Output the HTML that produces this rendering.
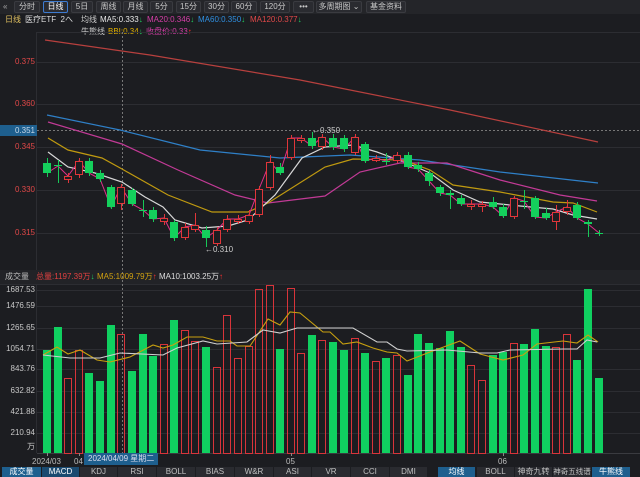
<!DOCTYPE html>
<html><head><meta charset="utf-8"><style>
*{margin:0;padding:0;box-sizing:border-box}
body{width:640px;height:477px;background:#1c1d21;font-family:"Liberation Sans","Noto Sans CJK SC",sans-serif;overflow:hidden;position:relative;color:#c8c8c8}
.tb{position:absolute;left:0;top:0;width:640px;height:14px;background:#242529}
.btn{position:absolute;top:1px;height:12px;border:1px solid #3a3b40;background:#2a2b30;border-radius:2px;font-size:8px;line-height:10px;text-align:center;color:#c8c8c8;white-space:nowrap;overflow:hidden}
.t{position:absolute;font-size:8px;line-height:10px;white-space:nowrap}
.tab{position:absolute;top:467px;height:10px;background:#2a2b30;font-size:8px;line-height:10px;text-align:center;color:#c0c0c0;white-space:nowrap;overflow:hidden}
.ax{position:absolute;font-size:8px;line-height:10px;text-align:right;width:35px;left:0}
</style></head><body>
<div class="tb"></div>
<div class="t" style="left:3px;top:2px;color:#aaa">«</div>
<div class="btn" style="left:14px;width:26px">分时</div>
<div class="btn" style="left:43px;width:25px;border-color:#3d7bd1;color:#fff">日线</div>
<div class="btn" style="left:71px;width:22px">5日</div>
<div class="btn" style="left:96px;width:25px">周线</div>
<div class="btn" style="left:123px;width:25px">月线</div>
<div class="btn" style="left:150px;width:23px">5分</div>
<div class="btn" style="left:176px;width:25px">15分</div>
<div class="btn" style="left:204px;width:25px">30分</div>
<div class="btn" style="left:231px;width:26px">60分</div>
<div class="btn" style="left:260px;width:30px">120分</div>
<div class="btn" style="left:293px;width:21px">•••</div>
<div class="btn" style="left:316px;width:46px">多周期图 ⌄</div>
<div class="btn" style="left:366px;width:40px">基金资料</div>

<div class="t" style="left:5px;top:15px;color:#e0c060">日线</div>
<div class="t" style="left:25px;top:15px;color:#ddd">医疗ETF&nbsp; 2へ</div>
<div class="t" style="left:81px;top:15px;color:#ccc">均线</div>
<div class="t" style="left:100px;top:15px;color:#e8e8e8">MA5:0.333<span style="color:#20d060">↓</span></div>
<div class="t" style="left:147px;top:15px;color:#d63fa8">MA20:0.346<span style="color:#20d060">↓</span></div>
<div class="t" style="left:198px;top:15px;color:#2f8fe0">MA60:0.350<span style="color:#20d060">↓</span></div>
<div class="t" style="left:250px;top:15px;color:#e04848">MA120:0.377<span style="color:#20d060">↓</span></div>
<div class="t" style="left:81px;top:27px;color:#ccc">牛熊线</div>
<div class="t" style="left:108px;top:27px;color:#e0b000">BBI:0.34<span style="color:#20d060">↓</span></div>
<div class="t" style="left:146px;top:27px;color:#d63fa8">收盘价:0.33<span style="color:#ff3030">↑</span></div>

<svg style="position:absolute;left:0;top:0" width="640" height="477">
<g stroke="#2c2d32" stroke-width="1">
<line x1="37" y1="32.5" x2="640" y2="32.5"/>
<line x1="36.5" y1="32" x2="36.5" y2="453"/>
<line x1="37" y1="62.5" x2="640" y2="62.5"/><line x1="37" y1="104.5" x2="640" y2="104.5"/><line x1="37" y1="147.5" x2="640" y2="147.5"/><line x1="37" y1="190.5" x2="640" y2="190.5"/><line x1="37" y1="233.5" x2="640" y2="233.5"/>
<line x1="37" y1="290.5" x2="640" y2="290.5"/><line x1="37" y1="306.5" x2="640" y2="306.5"/><line x1="37" y1="328.5" x2="640" y2="328.5"/><line x1="37" y1="349.5" x2="640" y2="349.5"/><line x1="37" y1="369.5" x2="640" y2="369.5"/><line x1="37" y1="391.5" x2="640" y2="391.5"/><line x1="37" y1="412.5" x2="640" y2="412.5"/><line x1="37" y1="433.5" x2="640" y2="433.5"/>
</g>
<rect x="0" y="270" width="640" height="14" fill="#222327"/>
<line x1="0" y1="284.5" x2="640" y2="284.5" stroke="#2c2d32"/>
<line x1="37" y1="453.5" x2="640" y2="453.5" stroke="#3a3b40"/>
<line x1="37" y1="130.5" x2="640" y2="130.5" stroke="#777" stroke-dasharray="2,2"/>
<line x1="122.5" y1="32" x2="122.5" y2="453" stroke="#777" stroke-dasharray="2,2"/>
<g fill="none" stroke-width="1.2">
<polyline stroke="#b8403e" points="45,40 150,55 300,80 450,110 598,142"/>
<polyline stroke="#2f80c8" points="47,115 120,130 200,150 280,158 350,155 420,160 500,172 598,183"/>
<polyline stroke="#c23a96" points="48,122 122,144 178,170 235,195 268,203 325,196 360,172 400,163 447,163 500,180 560,195 597,201"/>
<polyline stroke="#c09a10" points="48,138 68,150 102,158 122,169 168,195 212,212 248,212 268,203 325,167 353,159 403,160 430,170 453,185 500,192 553,202 573,203 597,212"/>
<polyline stroke="#d8d8d8" points="48,152 68,167 95,173 122,182 145,197 163,207 175,220 202,228 228,226 248,220 275,195 302,158 325,147 353,145 377,152 407,163 430,173 453,190 480,202 520,206 553,209 573,215 597,219"/>
<polyline stroke="#e0308a" stroke-width="1" points="47,173 58,166 68,176 79,161 89,173 100,179 111,207 121,187 132,204 143,210 153,219 164,218 174,238 185,227 195,225 206,238 217,230 227,219 238,219 249,215 259,189 270,162 280,173 291,138 301,138 312,146 322,137 333,147 344,149 355,137 365,161 376,158 386,161 397,155 408,167 418,169 429,181 440,193 450,195 461,204 471,204 482,204 493,207 503,216 514,198 524,201 535,217 546,218 556,212 567,207 577,218 588,224 599,233"/>
</g>
<g stroke="#18c858" stroke-width="1">
<line x1="47.5" y1="158" x2="47.5" y2="177"/><line x1="58.5" y1="160" x2="58.5" y2="183"/><line x1="89.5" y1="158" x2="89.5" y2="176"/><line x1="100.5" y1="170" x2="100.5" y2="182"/><line x1="111.5" y1="185" x2="111.5" y2="209"/><line x1="132.5" y1="188" x2="132.5" y2="206"/><line x1="143.5" y1="200" x2="143.5" y2="217"/><line x1="153.5" y1="207" x2="153.5" y2="222"/><line x1="174.5" y1="220" x2="174.5" y2="241"/><line x1="206.5" y1="226" x2="206.5" y2="247"/><line x1="280.5" y1="163" x2="280.5" y2="175"/><line x1="312.5" y1="132" x2="312.5" y2="149"/><line x1="333.5" y1="134" x2="333.5" y2="150"/><line x1="344.5" y1="135" x2="344.5" y2="152"/><line x1="365.5" y1="142" x2="365.5" y2="163"/><line x1="386.5" y1="153" x2="386.5" y2="165"/><line x1="408.5" y1="152" x2="408.5" y2="169"/><line x1="418.5" y1="162" x2="418.5" y2="172"/><line x1="429.5" y1="170" x2="429.5" y2="186"/><line x1="440.5" y1="185" x2="440.5" y2="196"/><line x1="450.5" y1="190" x2="450.5" y2="209"/><line x1="461.5" y1="195" x2="461.5" y2="206"/><line x1="493.5" y1="197" x2="493.5" y2="209"/><line x1="503.5" y1="204" x2="503.5" y2="218"/><line x1="524.5" y1="190" x2="524.5" y2="209"/><line x1="535.5" y1="196" x2="535.5" y2="219"/><line x1="546.5" y1="208" x2="546.5" y2="220"/><line x1="577.5" y1="202" x2="577.5" y2="220"/><line x1="588.5" y1="220" x2="588.5" y2="237"/><line x1="599.5" y1="230" x2="599.5" y2="236"/>
</g>
<g fill="#14d05c">
<rect x="43" y="163" width="8" height="10"/><rect x="54" y="165" width="8" height="1"/><rect x="85" y="161" width="8" height="12"/><rect x="96" y="173" width="8" height="6"/><rect x="107" y="187" width="8" height="20"/><rect x="128" y="190" width="8" height="14"/><rect x="139" y="210" width="8" height="1"/><rect x="149" y="210" width="8" height="9"/><rect x="170" y="222" width="8" height="16"/><rect x="202" y="230" width="8" height="8"/><rect x="276" y="167" width="8" height="6"/><rect x="308" y="138" width="8" height="8"/><rect x="329" y="138" width="8" height="9"/><rect x="340" y="138" width="8" height="11"/><rect x="361" y="144" width="8" height="17"/><rect x="382" y="161" width="8" height="1"/><rect x="404" y="155" width="8" height="12"/><rect x="414" y="165" width="8" height="4"/><rect x="425" y="173" width="8" height="8"/><rect x="436" y="187" width="8" height="6"/><rect x="446" y="193" width="8" height="2"/><rect x="457" y="198" width="8" height="6"/><rect x="489" y="202" width="8" height="5"/><rect x="499" y="207" width="8" height="9"/><rect x="520" y="201" width="8" height="1"/><rect x="531" y="198" width="8" height="19"/><rect x="542" y="213" width="8" height="5"/><rect x="573" y="205" width="8" height="13"/><rect x="584" y="222" width="8" height="2"/><rect x="595" y="233" width="8" height="1"/>
</g>
<g fill="#1c1d21" stroke="#e0363a" stroke-width="1">
<line x1="68.5" y1="173" x2="68.5" y2="183"/><line x1="79.5" y1="158" x2="79.5" y2="178"/><line x1="121.5" y1="184" x2="121.5" y2="210"/><line x1="164.5" y1="214" x2="164.5" y2="225"/><line x1="185.5" y1="223" x2="185.5" y2="240"/><line x1="195.5" y1="213" x2="195.5" y2="232"/><line x1="217.5" y1="227" x2="217.5" y2="246"/><line x1="227.5" y1="215" x2="227.5" y2="232"/><line x1="238.5" y1="215" x2="238.5" y2="224"/><line x1="249.5" y1="210" x2="249.5" y2="224"/><line x1="259.5" y1="186" x2="259.5" y2="217"/><line x1="270.5" y1="155" x2="270.5" y2="190"/><line x1="291.5" y1="135" x2="291.5" y2="160"/><line x1="301.5" y1="135" x2="301.5" y2="143"/><line x1="322.5" y1="134" x2="322.5" y2="150"/><line x1="355.5" y1="134" x2="355.5" y2="155"/><line x1="376.5" y1="155" x2="376.5" y2="162"/><line x1="397.5" y1="152" x2="397.5" y2="163"/><line x1="471.5" y1="200" x2="471.5" y2="210"/><line x1="482.5" y1="201" x2="482.5" y2="212"/><line x1="514.5" y1="196" x2="514.5" y2="219"/><line x1="556.5" y1="205" x2="556.5" y2="230"/><line x1="567.5" y1="200" x2="567.5" y2="215"/>
<rect x="64.5" y="176.5" width="7" height="3"/><rect x="75.5" y="161.5" width="7" height="13"/><rect x="117.5" y="187.5" width="7" height="16"/><rect x="160.5" y="218.5" width="7" height="3"/><rect x="181.5" y="227.5" width="7" height="10"/><rect x="191.5" y="225.5" width="7" height="4"/><rect x="213.5" y="230.5" width="7" height="13"/><rect x="223.5" y="219.5" width="7" height="10"/><rect x="234.5" y="219.5" width="7" height="2"/><rect x="245.5" y="215.5" width="7" height="6"/><rect x="255.5" y="189.5" width="7" height="25"/><rect x="266.5" y="162.5" width="7" height="25"/><rect x="287.5" y="138.5" width="7" height="19"/><rect x="297.5" y="138.5" width="7" height="2"/><rect x="318.5" y="137.5" width="7" height="9"/><rect x="351.5" y="137.5" width="7" height="15"/><rect x="372.5" y="158.5" width="7" height="2"/><rect x="393.5" y="155.5" width="7" height="5"/><rect x="467.5" y="204.5" width="7" height="2"/><rect x="478.5" y="204.5" width="7" height="2"/><rect x="510.5" y="198.5" width="7" height="18"/><rect x="552.5" y="212.5" width="7" height="9"/><rect x="563.5" y="207.5" width="7" height="4"/>
</g>
<text x="312" y="133" font-size="8" fill="#ccc" font-family="Liberation Sans">←0.350</text>
<text x="205" y="252" font-size="8" fill="#ccc" font-family="Liberation Sans">←0.310</text>
<g fill="#10d060">
<rect x="43" y="350" width="8" height="103"/><rect x="54" y="327" width="8" height="126"/><rect x="85" y="373" width="8" height="80"/><rect x="96" y="381" width="8" height="72"/><rect x="107" y="325" width="8" height="128"/><rect x="128" y="371" width="8" height="82"/><rect x="139" y="334" width="8" height="119"/><rect x="149" y="356" width="8" height="97"/><rect x="170" y="320" width="8" height="133"/><rect x="202" y="347" width="8" height="106"/><rect x="276" y="349" width="8" height="104"/><rect x="308" y="335" width="8" height="118"/><rect x="329" y="342" width="8" height="111"/><rect x="340" y="350" width="8" height="103"/><rect x="361" y="353" width="8" height="100"/><rect x="382" y="358" width="8" height="95"/><rect x="404" y="375" width="8" height="78"/><rect x="414" y="334" width="8" height="119"/><rect x="425" y="343" width="8" height="110"/><rect x="436" y="348" width="8" height="105"/><rect x="446" y="331" width="8" height="122"/><rect x="457" y="347" width="8" height="106"/><rect x="489" y="355" width="8" height="98"/><rect x="499" y="352" width="8" height="101"/><rect x="520" y="344" width="8" height="109"/><rect x="531" y="329" width="8" height="124"/><rect x="542" y="346" width="8" height="107"/><rect x="573" y="360" width="8" height="93"/><rect x="584" y="289" width="8" height="164"/><rect x="595" y="378" width="8" height="75"/>
</g>
<g fill="none" stroke="#d8343a" stroke-width="1">
<rect x="64.5" y="378.5" width="7" height="75"/><rect x="75.5" y="350.5" width="7" height="103"/><rect x="117.5" y="334.5" width="7" height="119"/><rect x="160.5" y="344.5" width="7" height="109"/><rect x="181.5" y="330.5" width="7" height="123"/><rect x="191.5" y="341.5" width="7" height="112"/><rect x="213.5" y="367.5" width="7" height="86"/><rect x="223.5" y="315.5" width="7" height="138"/><rect x="234.5" y="358.5" width="7" height="95"/><rect x="245.5" y="346.5" width="7" height="107"/><rect x="255.5" y="289.5" width="7" height="164"/><rect x="266.5" y="285.5" width="7" height="168"/><rect x="287.5" y="288.5" width="7" height="165"/><rect x="297.5" y="353.5" width="7" height="100"/><rect x="318.5" y="340.5" width="7" height="113"/><rect x="351.5" y="338.5" width="7" height="115"/><rect x="372.5" y="361.5" width="7" height="92"/><rect x="393.5" y="355.5" width="7" height="98"/><rect x="467.5" y="365.5" width="7" height="88"/><rect x="478.5" y="380.5" width="7" height="73"/><rect x="510.5" y="343.5" width="7" height="110"/><rect x="552.5" y="347.5" width="7" height="106"/><rect x="563.5" y="334.5" width="7" height="119"/>
</g>
<g fill="none" stroke-width="1.1">
<polyline stroke="#c8a010" points="43,355 57,347 68,354 80,350 97,360 110,362 130,357 153,345 163,348 173,345 187,337 203,337 217,341 230,341 237,346 250,346 268,319 280,325 290,312 300,313 323,332 330,332 343,344 357,342 373,348 387,352 397,353 407,361 430,352 460,341 480,354 503,360 523,355 537,344 563,341 577,343 588,335 598,342"/>
<polyline stroke="#d0d0d0" points="43,355 70,358 100,358 120,353 163,355 177,348 203,341 217,344 247,342 263,330 280,333 297,328 330,328 353,328 377,342 387,342 397,349 407,351 447,350 480,353 497,353 510,350 563,349 577,349 587,340 597,342"/>
</g>
<rect x="0" y="125" width="37" height="11" fill="#1e5f8e"/>
<rect x="84" y="453" width="74" height="12" fill="#1e5f8e"/>
<g stroke="#888"><line x1="47.5" y1="453" x2="47.5" y2="456"/><line x1="79.5" y1="453" x2="79.5" y2="456"/><line x1="291.5" y1="453" x2="291.5" y2="456"/><line x1="503.5" y1="453" x2="503.5" y2="456"/></g>
</svg>
<div class="ax" style="top:126px;color:#c8d8e8">0.351</div>
<div class="ax" style="top:57px;color:#e04848">0.375</div>
<div class="ax" style="top:99px;color:#e04848">0.360</div>
<div class="ax" style="top:142px;color:#e04848">0.345</div>
<div class="ax" style="top:185px;color:#e04848">0.330</div>
<div class="ax" style="top:228px;color:#e04848">0.315</div>
<div class="t" style="left:5px;top:272px;color:#bbb">成交量</div>
<div class="t" style="left:36px;top:272px;color:#e04040">总量:1197.39万<span style="color:#20d060">↓</span></div>
<div class="t" style="left:97px;top:272px;color:#d0a010">MA5:1009.79万<span style="color:#ff3030">↑</span></div>
<div class="t" style="left:159px;top:272px;color:#ddd">MA10:1003.25万<span style="color:#ff3030">↑</span></div>
<div class="ax" style="top:285px">1687.53</div>
<div class="ax" style="top:301px">1476.59</div>
<div class="ax" style="top:323px">1265.65</div>
<div class="ax" style="top:344px">1054.71</div>
<div class="ax" style="top:364px">843.76</div>
<div class="ax" style="top:386px">632.82</div>
<div class="ax" style="top:407px">421.88</div>
<div class="ax" style="top:428px">210.94</div>
<div class="ax" style="top:442px">万</div>
<div class="t" style="left:32px;top:457px;color:#bbb">2024/03</div>
<div class="t" style="left:74px;top:457px;color:#bbb">04</div>
<div class="t" style="left:88px;top:454px;color:#dde">2024/04/09 星期二</div>
<div class="t" style="left:286px;top:457px;color:#bbb">05</div>
<div class="t" style="left:498px;top:457px;color:#bbb">06</div>
<div class="tab" style="left:2px;width:39px;background:#1e5f8e;color:#fff">成交量</div>
<div class="tab" style="left:42px;width:37px;background:#1a4a70;color:#fff">MACD</div>
<div class="tab" style="left:80px;width:37px">KDJ</div>
<div class="tab" style="left:118px;width:38px">RSI</div>
<div class="tab" style="left:157px;width:38px">BOLL</div>
<div class="tab" style="left:196px;width:38px">BIAS</div>
<div class="tab" style="left:235px;width:38px">W&amp;R</div>
<div class="tab" style="left:274px;width:37px">ASI</div>
<div class="tab" style="left:312px;width:38px">VR</div>
<div class="tab" style="left:351px;width:38px">CCI</div>
<div class="tab" style="left:390px;width:37px">DMI</div>
<div class="tab" style="left:438px;width:37px;background:#1e5f8e;color:#fff">均线</div>
<div class="tab" style="left:477px;width:37px">BOLL</div>
<div class="tab" style="left:515px;width:37px">神奇九转</div>
<div class="tab" style="left:553px;width:38px;font-size:7.5px">神奇五线谱</div>
<div class="tab" style="left:592px;width:38px;background:#1e5f8e;color:#fff">牛熊线</div>
</body></html>
